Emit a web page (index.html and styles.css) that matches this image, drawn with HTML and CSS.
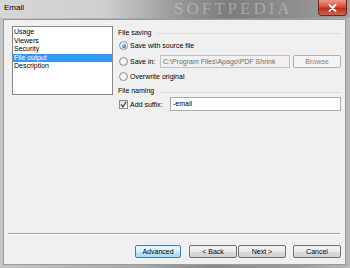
FILE: index.html
```html
<!DOCTYPE html>
<html lang="en">
<head>
    <meta charset="UTF-8">
    <meta name="viewport" content="width=device-width, initial-scale=1.0">
    <title>Email</title>
    <link rel="stylesheet" href="styles.css">
</head>
<body>

<div class="window">
    <div class="titlebar">
        <span class="title">Email</span>
        <span class="watermark">SOFTPEDIA</span>
        <div class="close-btn">
            <svg width="9" height="8" viewBox="0 0 9 8">
                <path d="M1.5 1 L7.5 7 M7.5 1 L1.5 7" stroke="#fff" stroke-width="1.8" stroke-linecap="round"/>
            </svg>
        </div>
    </div>

    <div class="client">
        <div class="content">
            <div class="list">
                <div class="list-item">Usage</div>
                <div class="list-item">Viewers</div>
                <div class="list-item">Security</div>
                <div class="list-item selected">File output</div>
                <div class="list-item">Description</div>
            </div>

            <div class="options">
                <div class="group-header">
                    <span>File saving</span>
                    <div class="group-line"></div>
                </div>
                <div class="row">
                    <span class="radio checked"></span>
                    <span>Save with source file</span>
                </div>
                <div class="row">
                    <span class="radio"></span>
                    <span class="save-label">Save in:</span>
                    <div class="textbox disabled">C:\Program Files\Apago\PDF Shrink</div>
                    <div class="btn small disabled">Browse</div>
                </div>
                <div class="row">
                    <span class="radio"></span>
                    <span>Overwrite original</span>
                </div>
                <div class="group-header">
                    <span>File naming</span>
                    <div class="group-line"></div>
                </div>
                <div class="row">
                    <span class="checkbox">
                        <svg width="7" height="7" viewBox="0 0 7 7">
                            <path d="M1 3.5 L3 5.8 L6.2 0.8" fill="none" stroke="#2a3a7a" stroke-width="1.2"/>
                        </svg>
                    </span>
                    <span class="suffix-label">Add suffix:</span>
                    <div class="textbox wide">-email</div>
                </div>
            </div>
        </div>

        <div class="footer">
            <div class="separator"></div>
            <div class="buttons">
                <div class="btn default">Advanced</div>
                <div class="btn-pair">
                    <div class="btn">&lt; Back</div>
                    <div class="btn">Next &gt;</div>
                </div>
                <div class="btn">Cancel</div>
            </div>
        </div>
    </div>
</div>

</body>
</html>
```

FILE: styles.css
```css
body {
    margin: 0;
    font-family: 'Liberation Sans', Arial, sans-serif;
    font-size: 7px;
    color: #000;
}

.window {
    width: 350px;
    height: 268px;
    display: flex;
    flex-direction: column;
    background: linear-gradient(90deg, #c4c4c4 0%, #a8a8a8 40%, #8a8a8a 60%, #9c9c9c 85%, #b8b8b8 100%);
    overflow: hidden;
}

.titlebar {
    height: 18px;
    flex-shrink: 0;
    display: flex;
    align-items: flex-start;
    position: relative;
    overflow: hidden;
    background: linear-gradient(90deg, #d6d6d6 0%, #cfcfcf 30%, #9a9a9a 50%, #7c7c7c 65%, #8e8e8e 85%, #a0a0a0 100%);
}

.title {
    margin: 3px 0 0 4px;
    font-size: 8px;
    color: #000;
}

.watermark {
    position: absolute;
    left: 174px;
    top: 0;
    font-family: 'Liberation Serif', serif;
    font-size: 17px;
    letter-spacing: 3px;
    color: rgba(255, 255, 255, 0.3);
    line-height: 17px;
}

.close-btn {
    position: absolute;
    right: 3px;
    top: 0;
    width: 29px;
    height: 16px;
    border: 1px solid #6b2a22;
    border-top: none;
    border-radius: 0 0 4px 4px;
    box-sizing: border-box;
    background: linear-gradient(180deg, #e89a8a 0%, #d9503a 45%, #b8301c 55%, #d86048 100%);
    display: flex;
    align-items: center;
    justify-content: center;
}

.client {
    flex: 1;
    margin: 1px 4px 3px 3px;
    background-color: #f0f0f0;
    border: 1px solid #9a9a9a;
    display: flex;
    flex-direction: column;
    justify-content: space-between;
}

.content {
    display: flex;
    padding: 6px 4px 0 8px;
    gap: 5px;
}

.list {
    width: 99px;
    height: 66px;
    flex-shrink: 0;
    background-color: #fff;
    border: 1px solid #828790;
    padding-top: 1px;
}

.list-item {
    height: 8.5px;
    line-height: 8.5px;
    padding-left: 1px;
}

.list-item.selected {
    background-color: #3399ff;
    color: #fff;
}

.options {
    flex: 1;
    display: flex;
    flex-direction: column;
}

.group-header {
    display: flex;
    align-items: center;
    height: 12px;
    gap: 6px;
}

.group-line {
    flex: 1;
    height: 0;
    border-top: 1px solid #d5dfe5;
    margin-top: 3px;
}

.row {
    display: flex;
    align-items: center;
    height: 15.5px;
    padding-left: 1px;
}

.radio {
    width: 7px;
    height: 7px;
    border-radius: 50%;
    border: 1px solid #8e8f8f;
    background: radial-gradient(circle, #fff 0%, #e6e6e6 100%);
    margin-right: 2px;
    display: flex;
    align-items: center;
    justify-content: center;
    flex-shrink: 0;
}

.radio.checked::after {
    content: "";
    width: 4px;
    height: 4px;
    border-radius: 50%;
    background: radial-gradient(circle at 35% 35%, #9ad2ff 0%, #1a6fc4 70%);
}

.save-label {
    width: 30px;
    flex-shrink: 0;
}

.suffix-label {
    width: 40px;
    flex-shrink: 0;
}

.textbox {
    height: 13px;
    box-sizing: border-box;
    border: 1px solid #abadb3;
    background-color: #fff;
    line-height: 11px;
    padding-left: 2px;
    white-space: nowrap;
    overflow: hidden;
}

.textbox.disabled {
    width: 130px;
    flex-shrink: 0;
    background-color: #f0f0f0;
    border-color: #c3c3c3;
    color: #6d6d6d;
}

.textbox.wide {
    flex: 1;
    height: 14px;
    line-height: 12px;
}

.checkbox {
    width: 9px;
    height: 9px;
    flex-shrink: 0;
    box-sizing: border-box;
    border: 1px solid #8e8f8f;
    background: linear-gradient(180deg, #dcdcdc 0%, #fafafa 100%);
    margin-right: 2px;
    display: flex;
    align-items: center;
    justify-content: center;
}

.btn {
    width: 48px;
    height: 13px;
    flex-shrink: 0;
    box-sizing: border-box;
    border: 1px solid #707070;
    border-radius: 2px;
    background: linear-gradient(180deg, #f2f2f2 0%, #ebebeb 50%, #dddddd 51%, #cfcfcf 100%);
    text-align: center;
    line-height: 11px;
}

.btn.small {
    margin-left: 3px;
}

.btn.disabled {
    background: #f4f4f4;
    border-color: #adb2b5;
    color: #838383;
}

.btn.default {
    width: 46px;
    border-color: #3c7fb1;
    background: linear-gradient(180deg, #eaf6fd 0%, #d9f0fc 50%, #bee6fd 51%, #a7d9f5 100%);
}

.footer {
    padding: 0 4px 6px 4px;
}

.separator {
    border-top: 1px solid #a0a0a0;
    border-bottom: 1px solid #fff;
    margin-right: 1px;
    margin-bottom: 10px;
}

.buttons {
    display: flex;
    justify-content: flex-end;
    gap: 7px;
}

.btn-pair {
    display: flex;
    gap: 1px;
    margin-left: 1px;
}
```
